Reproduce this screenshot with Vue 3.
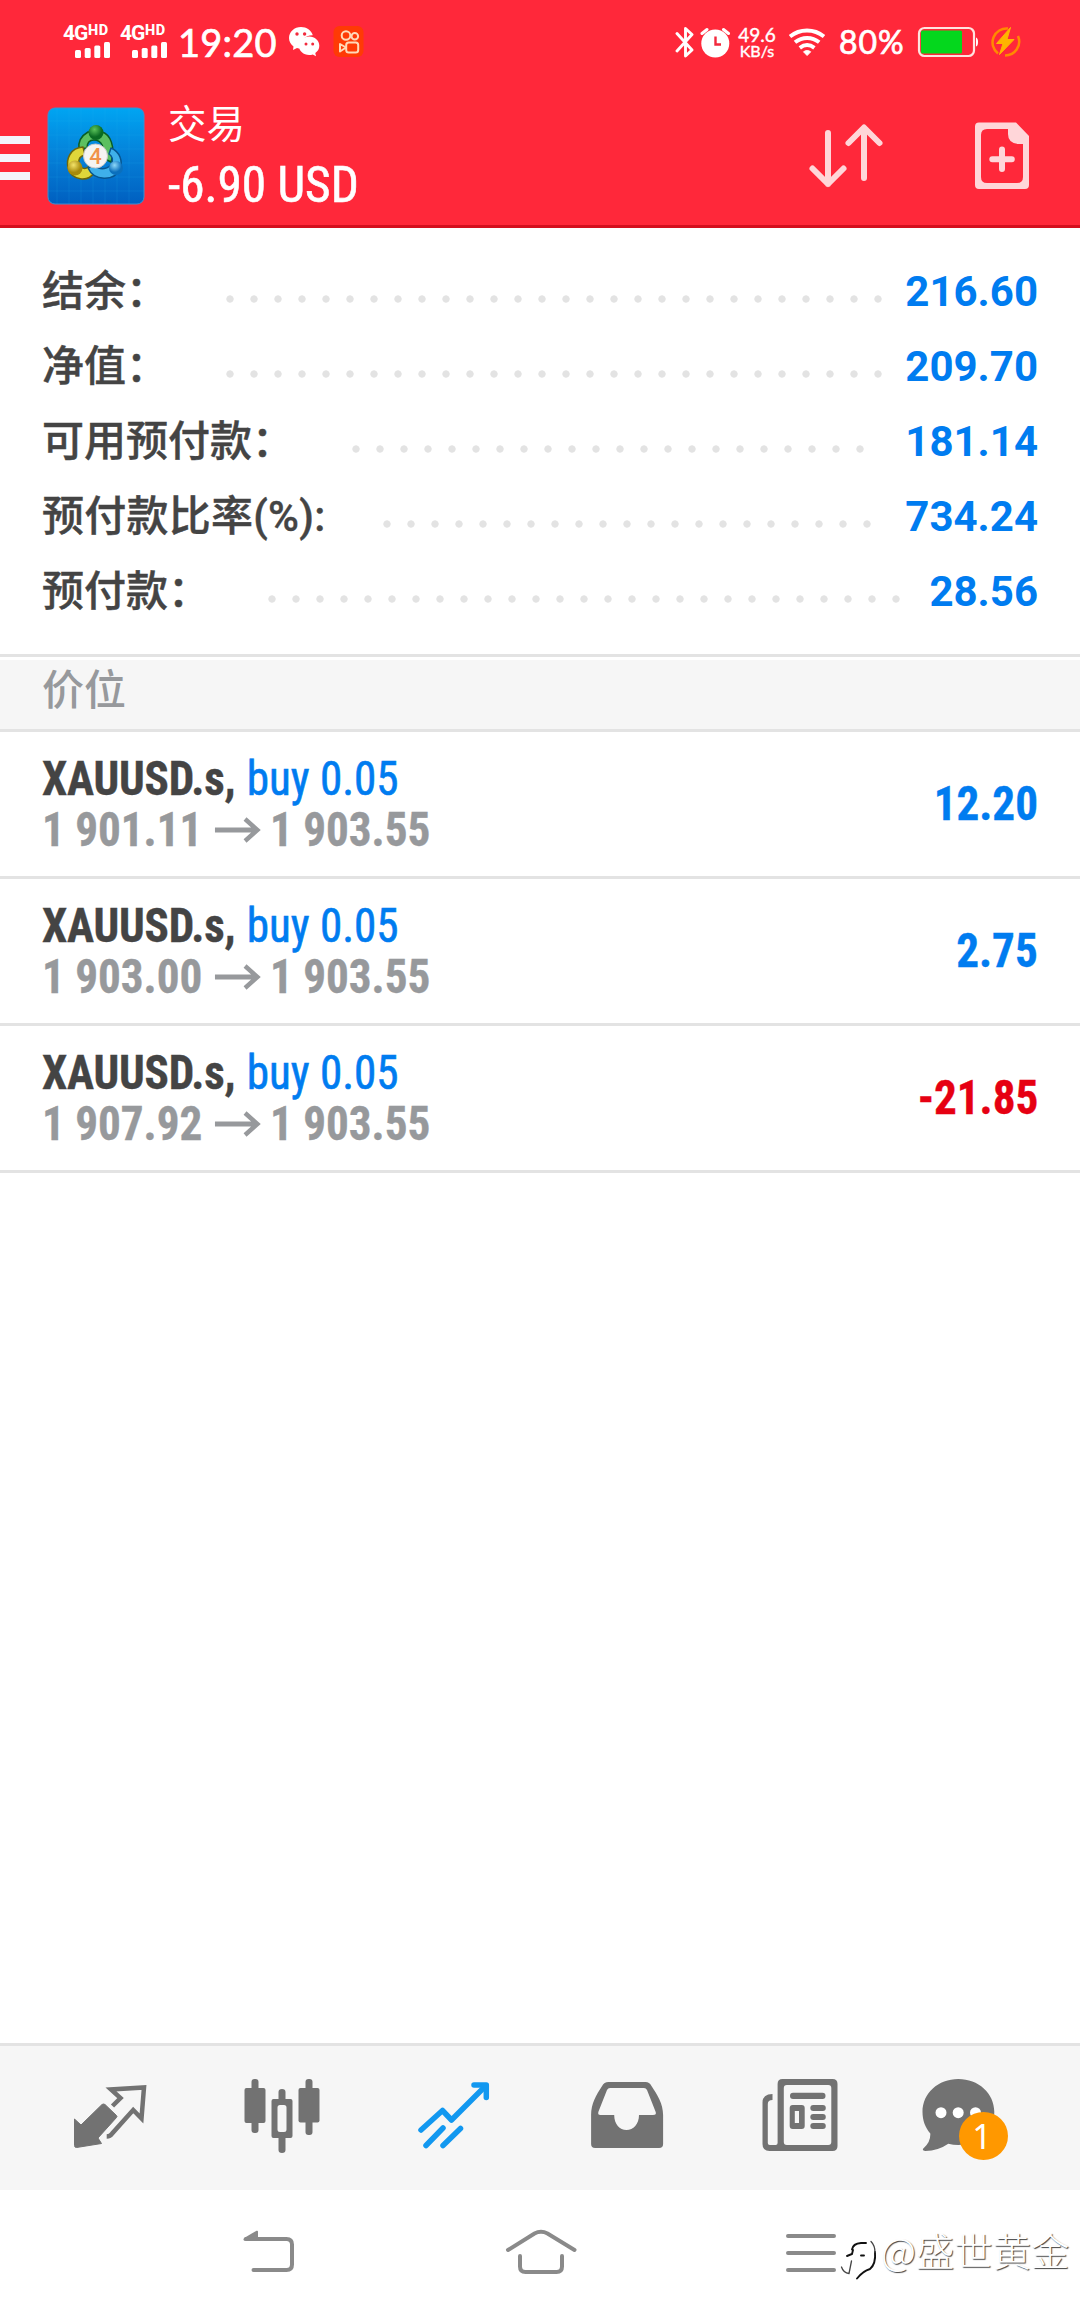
<script setup>
const summary = [
  { label: '结余：', value: '216.60', dots: 28 },
  { label: '净值：', value: '209.70', dots: 28 },
  { label: '可用预付款：', value: '181.14', dots: 22 },
  { label: '预付款比率(%):', value: '734.24', dots: 21, loose: true },
  { label: '预付款：', value: '28.56', dots: 27 },
]
const positions = [
  { symbol: 'XAUUSD.s,', side: 'buy 0.05', open: '1 901.11', now: '1 903.55', profit: '12.20' },
  { symbol: 'XAUUSD.s,', side: 'buy 0.05', open: '1 903.00', now: '1 903.55', profit: '2.75' },
  { symbol: 'XAUUSD.s,', side: 'buy 0.05', open: '1 907.92', now: '1 903.55', profit: '-21.85' },
]
</script>

<template>
  <div class="screen">
    <header class="top">
      <div class="status">
        <div v-for="n in 2" :key="n" class="signal">
          <div class="net"><b>4G</b><i>HD</i></div>
          <svg width="35" height="16" viewBox="0 0 35 16" fill="#fff"><rect x="0" y="8" width="6" height="8" rx="1.5" /><rect x="9.7" y="6" width="6" height="10" rx="1.5" /><rect x="19.3" y="3.5" width="6" height="12.500" rx="1.500" /><rect x="29" y="0" width="6" height="16" rx="1.500" /></svg>
        </div>
        <span class="clock">19:20</span>
        <svg class="wechat" width="32" height="32" viewBox="288 26 32 32">
          <path fill="#fff" d="M301 27c-6.600 0-12 4.800-12 11 0 3.500 1.800 6.500 4.500 8.500l-.500 3.500 4-2c1.400.400 2.800.600 4.300.500-2-8 4-13.500 11.500-13.300C311.500 30.500 306.500 27 301 27z" />
          <path fill="#fff" d="M309.200 36.500c-5.700 0-10.300 4-10.300 9.200s4.600 9.300 10.300 9.300c1.300 0 2.500-.2 3.600-.6l3.200 1.800-.7-3.200c2.500-1.700 4-4.300 4-7.300 0-5.200-4.500-9.200-10.100-9.200z" />
          <g fill="#f2293c"><circle cx="297" cy="34" r="1.700" /><circle cx="304.600" cy="34" r="1.700" /><circle cx="306" cy="44" r="1.500" /><circle cx="312.700" cy="44" r="1.500" /></g>
        </svg>
        <svg class="kwai" width="32" height="32" viewBox="333 26 32 32">
          <rect x="333.500" y="26" width="30" height="31" rx="6" fill="#ff3a05" />
          <g fill="none" stroke="#ffd9b8" stroke-width="2"><circle cx="346" cy="35.500" r="4.300" /><circle cx="354.800" cy="36.300" r="3.300" /><rect x="346.200" y="42.500" width="12" height="10" rx="2.500" /><path d="M346 47.500l-6-3.500v7.500z" stroke-linejoin="round" /></g>
        </svg>
        <div class="fill"></div>
        <svg width="20" height="32" viewBox="675 26 20 32"><path d="M677 33.500L692 50l-6.500 6V28.500l6.500 6L677 51" fill="none" stroke="#fff" stroke-width="2.900" stroke-linejoin="round" stroke-linecap="round" /></svg>
        <svg class="alarm" width="32" height="32" viewBox="700 26 32 32"><circle cx="715.300" cy="43.500" r="14" fill="#fff" /><path d="M715.500 36.500v8h5.500" fill="none" stroke="#f2293c" stroke-width="2.400" /><path d="M702 33.500l5-4M728.500 33.500l-5-4" stroke="#fff" stroke-width="3" stroke-linecap="round" /></svg>
        <div class="rate"><span>49.6</span><span class="unit">KB/s</span></div>
        <svg class="wifi" width="38" height="32" viewBox="788 26 38 32" fill="none" stroke="#fff" stroke-width="3.900"><path d="M790 36.500c10-8 24-8 34 0M795 42.300c7.300-5.800 17-5.800 24.200 0M799.800 47.900c4.600-3.500 10-3.500 14.600 0" /><path d="M803.500 51.800c2.200-1.600 5-1.600 7.200 0l-3.600 3.700z" fill="#fff" stroke-width="1" /></svg>
        <span class="pct">80%</span>
        <svg class="battery" width="62" height="32" viewBox="917 26 62 32"><rect x="919" y="28" width="55" height="28" rx="5.500" fill="none" stroke="#ffe3df" stroke-width="2.200" /><rect x="921" y="30.500" width="41" height="23" rx="1.500" fill="#04d71d" /><path d="M976 37.500q2 .5 2 4.500t-2 4.500z" fill="#fff" /></svg>
        <svg class="bolt" width="32" height="32" viewBox="989 26 32 32" fill="none"><path d="M1008 28.500a14 14 0 0 0-10 25M1018 36a14 14 0 0 1-13 19.500" stroke="#ff8a00" stroke-width="2.500" /><path d="M1010.500 27.500L996.500 43.500h6.500L999.500 54.500 1014 39.500h-7z" fill="#ffb400" stroke="#ffb400" stroke-linejoin="round" /></svg>
      </div>

      <div class="titlebar">
        <div class="burger"><i></i><i></i><i></i></div>
        <svg class="logo" width="98" height="98" viewBox="0 0 98 98">
          <defs>
            <linearGradient id="bg" x1="0" y1="0" x2="0" y2="1"><stop offset="0" stop-color="#00a5f2" /><stop offset=".5" stop-color="#0580d8" /><stop offset="1" stop-color="#005fc0" /></linearGradient>
            <radialGradient id="gr" cx=".4" cy=".3"><stop offset="0" stop-color="#5cc45b" /><stop offset="1" stop-color="#0a6b22" /></radialGradient>
            <radialGradient id="ye" cx=".4" cy=".3"><stop offset="0" stop-color="#f3e36a" /><stop offset="1" stop-color="#a78a0b" /></radialGradient>
            <radialGradient id="bl" cx=".4" cy=".3"><stop offset="0" stop-color="#8ed8f8" /><stop offset="1" stop-color="#0a6fbd" /></radialGradient>
          </defs>
          <rect x="1" y="1" width="96" height="96" rx="7" fill="url(#bg)" stroke="#3d8fd0" />
          <path d="M10 1v96M22 1v96M34 1v96M46 1v96M58 1v96M70 1v96M82 1v96M1 14h96M1 28h96M1 42h96M1 56h96M1 70h96M1 84h96" stroke="#35b5f5" stroke-opacity=".14" />
          <g stroke-width="1.500" stroke-linejoin="round">
            <path d="M41 25c-7 4-10 10-9 17l8-1c0-5 2-8 7-8 8 0 11 8 9 18l8 4c5-15-1-28-9-30z" fill="#5cc060" stroke="#0b5d25" />
            <path d="M36 40c-13 1-17 12-15 21 4 13 20 14 26 5l-6-6c-3 3-8 1-9-3-1-5 1-8 6-9z" fill="#dfd63a" stroke="#6c650b" />
            <path d="M64 41c9 4 12 13 9 21-6 13-26 12-32-1l7-3c5 6 14 4 17-2 1-4 0-7-3-9z" fill="#3fb0ea" stroke="#07558f" />
          </g>
          <circle cx="49" cy="25.500" r="7.500" fill="url(#gr)" /><circle cx="28" cy="61" r="7.500" fill="url(#ye)" /><circle cx="69" cy="61" r="7" fill="url(#bl)" />
          <circle cx="48.500" cy="49" r="12" fill="#f5f4f2" stroke="#c9c9c9" />
          <text x="48.500" y="57" text-anchor="middle" font-family="Roboto" font-size="22" font-weight="500" fill="#f0924a">4</text>
        </svg>
        <div class="account">
          <span class="page">交易</span>
          <span class="total cond">-6.90 USD</span>
        </div>
        <div class="fill"></div>
        <svg class="sort" width="76" height="70" viewBox="808 121 76 70" fill="none" stroke="#ffd6d9" stroke-width="6" stroke-linecap="round" stroke-linejoin="round"><path d="M828 133v51M812.500 168.500l15.500 15.500 15.500-15.500M864 178v-50M848.500 143l15.500-15.500 15.500 15.500" /></svg>
        <svg class="neworder" width="56" height="70" viewBox="974 121 56 70"><path fill="#ffd6d9" fill-rule="evenodd" d="M979 122.500h37l13 13.500v49a4 4 0 0 1-4 4h-46a4 4 0 0 1-4-4v-58.500a4 4 0 0 1 4-4zM987 129q-6 0-6 6v42q0 6 6 6h30q6 0 6-6v-33h-5q-10-1-10-10v-5z" /><path d="M1002 149.500v19.500M992.300 159.300h19.500" stroke="#ffd6d9" stroke-width="6" stroke-linecap="round" /></svg>
      </div>
    </header>

    <section class="summary">
      <div v-for="row in summary" :key="row.label" class="srow">
        <span class="label" :class="{ loose: row.loose }">{{ row.label }}</span>
        <span class="dots" :style="{ width: row.dots * 24 + 'px' }"></span>
        <span class="value">{{ row.value }}</span>
      </div>
    </section>

    <div class="section">价位</div>

    <article v-for="p in positions" :key="p.open" class="pos">
      <div class="info">
        <div class="line"><span class="sym cond">{{ p.symbol }}</span><span class="side cond">{{ p.side }}</span></div>
        <div class="line price">
          <span class="open cond">{{ p.open }}</span>
          <svg width="50" height="28" viewBox="0 0 50 28" fill="none" stroke="#97999c" stroke-width="4.800"><path d="M1 14h45M33 3l13 11-13 11" /></svg>
          <span class="now cond">{{ p.now }}</span>
        </div>
      </div>
      <span class="profit cond" :class="{ loss: p.profit.startsWith('-') }">{{ p.profit }}</span>
    </article>

    <div class="blank"></div>

    <nav class="tabs">
      <svg viewBox="59 2076 100 80"><path fill="#727272" stroke="#727272" stroke-linejoin="round" d="M74.500 2119l6.500 6 21-20.500q1.500-1 3 0l11.500 11q1 1 0 2L98 2138l3.500 5.500-25 4q-2 0-2-2z" /><path fill="none" stroke="#727272" stroke-width="4.500" d="M112.500 2106l8-8-9.500-8.500 33-2-2.500 31-8.300-8.500-21 23.500q-2 3-5.500 3" /></svg>
      <svg viewBox="231.500 2076 100 80" fill="#727272"><rect x="244" y="2088" width="21" height="35" rx="2" /><rect x="251" y="2079" width="7" height="54" rx="3" /><path fill-rule="evenodd" d="M273 2099h17q2 0 2 2v35q0 2-2 2h-17q-2 0-2-2v-35q0-2 2-2zm6.500 6q-2.500 0-2.500 2.500v22q0 2.500 2.500 2.500h4q2.500 0 2.500-2.500v-22q0-2.500-2.500-2.500z" /><path d="M278 2100v-8q0-3 3.500-3t3.500 3v8zM278 2137v13q0 3 3.500 3t3.500-3v-13z" /><rect x="298" y="2088" width="21" height="34.500" rx="2" /><rect x="305" y="2079" width="7" height="56" rx="3" /></svg>
      <svg viewBox="404 2076 100 80" fill="none" stroke="#1298f0" stroke-width="5.500" stroke-linecap="round"><path d="M421 2130l21.500-19.500 9 9.500 34-34" stroke-linejoin="round" /><path d="M474 2085h12.300v12.500" stroke-linejoin="round" /><path d="M426 2145.500l17-17.500M443 2145.500l17.500-17" /></svg>
      <svg viewBox="576.500 2076 100 80"><path fill="#727272" fill-rule="evenodd" d="M608 2082h37q4 0 6 4c6 9 11.600 18 11.600 29v29q0 4-4 4h-64q-4 0-4-4v-29c0-11 5-20 11-29q2-4 6.400-4zm1.500 6q-2 0-3 2l-8.500 21.500q-1.200 3.500 2 3.500h13.700c0 9 5.500 15 12.300 15s12.500-6 12.500-15h14q4 0 2.500-3.500l-8.500-21.500q-1-2-3-2z" /></svg>
      <svg viewBox="749 2076 100 80" fill="#727272"><path fill-rule="evenodd" d="M782.500 2079h50q5 0 5 5v62q0 5-5 5h-63q-7 0-7-7v-41.500q0-8.500 10-8.500v6q-4.700 0-4.700 4v39q0 2 2 2h5.800q2 0 2-2v-59q0-5 4.900-5zm4.300 6q-3 0-3 3v54q0 3 3 3h41.500q3 0 3-3v-54q0-3-3-3z" /><rect x="790" y="2092.700" width="35.500" height="6.300" rx="3" /><path fill-rule="evenodd" d="M792.700 2105h9q3 0 3 3v18q0 3-3 3h-9q-3 0-3-3v-18q0-3 3-3zm2.100 6v12h4.200v-12z" /><rect x="810.300" y="2105" width="15.500" height="6" rx="3" /><rect x="810.300" y="2114" width="15.500" height="6" rx="3" /><rect x="810.300" y="2123" width="15.500" height="6" rx="3" /></svg>
      <div class="chat">
        <svg viewBox="921.500 2076 100 80"><path fill="#727272" d="M957.800 2079c20 0 36 14 36 33s-16 33-36 33q-5 0-10-1.200-10 7-23 7.200-4-1-1.500-3 7-6 6.500-14.500c-5-6-7.800-13-7.800-21.500 0-19 15.800-33 35.800-33z" /><g fill="#fff"><circle cx="940.500" cy="2112.700" r="5.500" /><circle cx="957.700" cy="2112.700" r="5.500" /><circle cx="975" cy="2112.700" r="5.500" /></g></svg>
        <span class="badge">1</span>
      </div>
    </nav>

    <footer class="sysnav">
      <svg class="back" width="60" height="54" viewBox="238 2224 60 54"><path fill="none" stroke="#8a8a8a" stroke-width="4" stroke-linecap="round" d="M253.500 2270h33q5.500 0 5.500-5.500v-20q0-5.500-5.500-5.500H246" /><path fill="#8a8a8a" d="M243.500 2239.500q0-1 1-1.700l12-7q1.500-.5 1.500 1v9h-13q-1.500 0-1.500-1.300z" /></svg>
      <svg class="home" width="76" height="54" viewBox="503 2224 76 54" fill="none" stroke="#8a8a8a" stroke-width="4" stroke-linecap="round"><path d="M508 2250l26.500-16.500q6.500-3.300 13 0L574.500 2250M520 2256v10.500q0 5.500 5.500 5.500h31q5.500 0 5.500-5.500V2256" /></svg>
      <svg class="menu" width="57" height="54" viewBox="782 2224 57 54" stroke="#8a8a8a" stroke-width="4" stroke-linecap="round"><path d="M788 2236h46M788 2253h46M788 2270h46" /></svg>
      <div class="mark">
        <svg width="40" height="46" viewBox="839 2236 40 46" fill="none" stroke-linecap="round"><path stroke="#111" stroke-width="1.900" d="M852 2249.500q1-6 9-6.500h5M847 2256l5-2 1-4M861 2255.500h3M875 2252q1 12-5 17-7 2-13 9.500" /><path stroke="#444" stroke-width="1.300" d="M849 2273.500l2.500-12.500M841.500 2267q2 6 7.500 6.500M871 2241.500q4 4 4 11" /></svg>
        <span>@盛世黄金</span>
      </div>
    </footer>
  </div>
</template>

<style>
body { margin: 0; background: #fff; }
</style>

<style scoped>
.screen { width: 1080px; height: 2316px; display: flex; flex-direction: column; overflow: hidden; background: #fff; font-family: Roboto, "Noto Sans CJK SC", sans-serif; }
svg { display: block; flex: none; }
.fill { flex: 1; }
.cond { font-family: "Roboto Condensed", Roboto, sans-serif; font-stretch: 75%; white-space: nowrap; }
.top { height: 225px; background: #ff283a; border-bottom: 3px solid #d30f1e; color: #fff; }
.status { height: 84px; display: flex; align-items: center; padding-left: 63px; padding-right: 59px; }
.signal { width: 47px; height: 32px; margin-right: 10px; display: flex; flex-direction: column; justify-content: space-between; }
.signal svg { margin-left: 12px; }
.net { display: flex; height: 15px; line-height: 15px; font-size: 21px; letter-spacing: -1px; }
.net b { width: 25px; }
.net i { font-style: normal; font-weight: 800; font-size: 14.500px; line-height: 10px; letter-spacing: .5px; }
.clock { width: 95px; margin-left: 1px; font: 400 38px/44px Lato, sans-serif; letter-spacing: .2px; -webkit-text-stroke: .7px #fff; white-space: nowrap; }
.wechat { margin-left: 15px; }
.kwai { margin-left: 13px; }
.alarm { margin-left: 5px; }
.rate { width: 42px; margin-left: 4px; display: flex; flex-direction: column; align-items: center; font: 400 19px/17px Lato, sans-serif; -webkit-text-stroke: .4px #fff; }
.rate .unit { font-size: 16px; line-height: 15px; }
.wifi { margin-left: 10px; }
.pct { width: 67px; margin-left: 13px; font: 400 32px/38px Lato, sans-serif; letter-spacing: .9px; -webkit-text-stroke: .7px #fff; white-space: nowrap; }
.battery { margin-left: 11px; }
.bolt { margin-left: 10px; }
.titlebar { height: 141px; display: flex; align-items: flex-start; }
.burger { width: 30px; padding-top: 52px; display: flex; flex-direction: column; gap: 10px; }
.burger i { height: 8px; background: #f4f3fb; }
.logo { margin: 23px 0 0 17px; }
.account { margin: 10px 0 0 23px; display: flex; flex-direction: column; align-items: flex-start; }
.page { font: 400 38.500px/54px "Noto Sans CJK SC", sans-serif; }
.total { font-size: 50px; line-height: 58px; margin-top: 8px; transform: scaleX(.985); transform-origin: 0 50%; -webkit-text-stroke: .6px #fff; }
.sort { margin: 37px 90px 0 0; }
.neworder { margin: 37px 50px 0 0; }
.summary { height: 426px; box-sizing: border-box; padding: 26px 42px 0; }
.srow { height: 75px; display: flex; align-items: center; }
.label { font-size: 42px; font-weight: 500; line-height: 75px; color: #444; margin-right: 50px; white-space: nowrap; -webkit-text-stroke: .4px #444; }
.label.loose { letter-spacing: .25px; }
.dots { height: 8px; margin-top: 14px; background: radial-gradient(circle, #e3e3e3 3.300px, transparent 4px) 0 0 / 24px 8px; }
.value { margin-left: auto; font-size: 42px; font-weight: 700; color: #007cf0; line-height: 75px; }
.section { height: 72px; box-sizing: content-box; border-top: 3px solid #e3e3e3; border-bottom: 3px solid #e3e3e3; padding: 0 42px; background: linear-gradient(#fff 3px, #f6f6f6 3px); font: 500 42px/60px "Noto Sans CJK SC", sans-serif; color: #97999c; }
.pos { height: 144px; border-bottom: 3px solid #e3e3e3; display: flex; justify-content: space-between; padding: 0 42px; }
.info { padding-top: 21px; transform: scaleX(.94); transform-origin: 0 50%; }
.line { height: 51px; line-height: 51px; display: flex; font-size: 48px; color: #444; align-items: center; }
.sym { font-weight: 700; letter-spacing: -.2px; -webkit-text-stroke: .4px #444; }
.side { color: #007cf0; margin-left: 12px; -webkit-text-stroke: .6px #007cf0; }
.price { color: #97999c; font-weight: 700; -webkit-text-stroke: .4px #97999c; }
.price svg { margin: 0 10px 0 12px; }
.profit { font-size: 48px; font-weight: 700; line-height: 144px; color: #007cf0; transform: scaleX(.94); transform-origin: 100% 50%; -webkit-text-stroke: .4px currentColor; }
.profit.loss { color: #e60012; }
.blank { flex: 1; }
.tabs { height: 144px; border-top: 3px solid #e3e3e3; background: #f6f6f6; display: flex; gap: 72.500px; padding-left: 59px; align-items: flex-start; }
.tabs svg { width: 100px; height: 80px; margin-top: 30px; }
.chat { position: relative; }
.badge { position: absolute; left: 37.500px; top: 66px; width: 49px; height: 48px; border-radius: 50%; background: #ff9800; color: #fff; font: 400 34px/48px "Noto Sans", sans-serif; text-align: center; text-indent: -3px; }
.sysnav { height: 126px; display: flex; align-items: flex-start; }
.sysnav > svg { margin-top: 34px; }
.back { margin-left: 238px; }
.home { margin-left: 205px; }
.menu { margin-left: 203px; }
.mark { margin-top: 34px; display: flex; align-items: flex-start; color: #fff; white-space: nowrap; }
.mark svg { margin-top: 12px; }
.mark span { font: 300 38.400px/50px "Noto Sans CJK SC", sans-serif; margin-left: 2px; text-shadow: 1px 1px 1px rgba(0, 0, 0, .75); }
</style>
